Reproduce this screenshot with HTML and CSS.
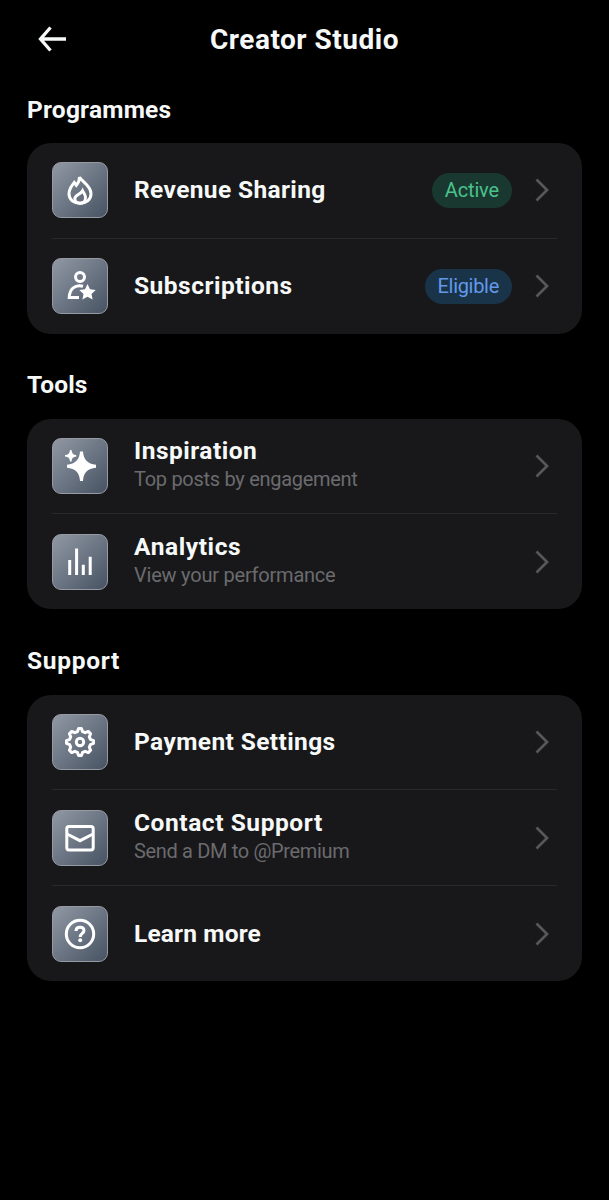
FILE: index.html
```html
<!DOCTYPE html>
<html lang="en">
<head>
    <meta charset="UTF-8">
    <meta name="viewport" content="width=device-width, initial-scale=1.0">
    <title>Creator Studio</title>
    <link rel="stylesheet" href="styles.css">
</head>
<body>
    <header>
        <a href="#" class="back" aria-label="Back">
            <svg width="28" height="26" viewBox="0 0 28 26"><path d="M12.500 1.500L2.500 13l10 11.500M2.500 13h25.500"/></svg>
        </a>
        <h1>Creator Studio</h1>
    </header>

    <main>
        <!-- Programmes -->
        <section>
            <h2 class="programmes">Programmes</h2>
            <div class="card">
                <a href="#" class="row">
                    <span class="icon">
                        <svg viewBox="0 0 32 32"><path d="M15.500 3C17.500 7.500 27 11.500 27 19.800C27 26 22 29.300 16 29.300S5 26 5 19.800C5 14.500 8 11.500 10.300 8.500L12.300 11.300C14.300 9 15.500 6.500 15.500 3Z"/><path d="M18.600 16.800C19.700 19 21.500 20.500 21.500 23.800C21.500 27.300 19 29.300 16 29.300S10.800 27.300 10.800 24.500C10.800 21 16.500 20.500 18.600 16.800Z"/></svg>
                    </span>
                    <span class="text"><span class="title revenue">Revenue Sharing</span></span>
                    <span class="badge active">Active</span>
                    <svg class="chevron" viewBox="0 0 14 24"><path d="M1.500 1.500L12 12L1.500 22.500"/></svg>
                </a>
                <a href="#" class="row">
                    <span class="icon">
                        <svg viewBox="0 0 32 32"><circle cx="16" cy="7" r="4.500"/><path d="M19 16.200C11 14 5.500 19 5.200 27.500H15"/><path class="fill" d="M23.500 14L26 19.200L31.700 19.900L27.500 23.900L28.600 29.500L23.500 26.700L18.400 29.500L19.500 23.900L15.300 19.900L21 19.200Z"/></svg>
                    </span>
                    <span class="text"><span class="title subscriptions">Subscriptions</span></span>
                    <span class="badge eligible">Eligible</span>
                    <svg class="chevron" viewBox="0 0 14 24"><path d="M1.500 1.500L12 12L1.500 22.500"/></svg>
                </a>
            </div>
        </section>

        <!-- Tools -->
        <section>
            <h2 class="tools">Tools</h2>
            <div class="card">
                <a href="#" class="row">
                    <span class="icon">
                        <svg viewBox="0 0 32 32"><path class="fill" d="M16 1.500H19C19.500 9.500 23.500 14 32 14.700V17.700C23.500 18.400 19.500 22.500 19 31H16C15.500 22.500 11.500 18.400 3 17.700V14.700C11.500 14 15.500 9.500 16 1.500ZM6 0H7.500C7.700 3.200 9.300 4.900 12.300 5V6.600C9.300 6.800 7.700 8.400 7.500 11.500H6C5.800 8.400 4.200 6.800 1 6.600V5C4.200 4.900 5.800 3.200 6 0Z"/></svg>
                    </span>
                    <span class="text">
                        <span class="title inspiration">Inspiration</span>
                        <span class="subtitle posts">Top posts by engagement</span>
                    </span>
                    <svg class="chevron" viewBox="0 0 14 24"><path d="M1.500 1.500L12 12L1.500 22.500"/></svg>
                </a>
                <a href="#" class="row">
                    <span class="icon">
                        <svg viewBox="0 0 32 32"><path d="M5.700 14V29M12.600 2.500V29M19.300 18.700V29M26.200 10.700V29"/></svg>
                    </span>
                    <span class="text">
                        <span class="title analytics">Analytics</span>
                        <span class="subtitle performance">View your performance</span>
                    </span>
                    <svg class="chevron" viewBox="0 0 14 24"><path d="M1.500 1.500L12 12L1.500 22.500"/></svg>
                </a>
            </div>
        </section>

        <!-- Support -->
        <section>
            <h2 class="support">Support</h2>
            <div class="card">
                <a href="#" class="row">
                    <span class="icon">
                        <svg viewBox="0 0 32 32"><path stroke-linejoin="round" d="M14.600 2.500H17.400L18.600 5.600L21.200 6.700L24.300 5.400L26.600 7.700L25.300 10.800L26.400 13.400L29.500 14.600V17.400L26.400 18.600L25.300 21.200L26.600 24.300L24.300 26.600L21.200 25.300L18.600 26.400L17.400 29.500H14.600L13.400 26.400L10.800 25.300L7.700 26.600L5.400 24.300L6.700 21.200L5.600 18.600L2.500 17.400V14.600L5.600 13.400L6.700 10.800L5.400 7.700L7.700 5.400L10.800 6.700L13.400 5.600Z"/><circle cx="16" cy="16" r="3.700"/></svg>
                    </span>
                    <span class="text"><span class="title payment">Payment Settings</span></span>
                    <svg class="chevron" viewBox="0 0 14 24"><path d="M1.500 1.500L12 12L1.500 22.500"/></svg>
                </a>
                <a href="#" class="row">
                    <span class="icon">
                        <svg viewBox="0 0 32 32"><rect x="2.800" y="4.500" width="26.400" height="23.500" rx="2.200"/><path d="M3 12L16 18.700L29 12"/></svg>
                    </span>
                    <span class="text">
                        <span class="title contact">Contact Support</span>
                        <span class="subtitle premium">Send a DM to @Premium</span>
                    </span>
                    <svg class="chevron" viewBox="0 0 14 24"><path d="M1.500 1.500L12 12L1.500 22.500"/></svg>
                </a>
                <a href="#" class="row">
                    <span class="icon">
                        <svg viewBox="0 0 32 32"><circle cx="16" cy="16" r="13.700"/><path d="M12 13C12 10.300 13.700 9.200 16 9.200C18.300 9.200 20 10.400 20 12.500C20 15.500 16.200 15.500 16.200 19"/><circle class="fill" cx="16.200" cy="22.300" r="2"/></svg>
                    </span>
                    <span class="text"><span class="title learn">Learn more</span></span>
                    <svg class="chevron" viewBox="0 0 14 24"><path d="M1.500 1.500L12 12L1.500 22.500"/></svg>
                </a>
            </div>
        </section>
    </main>
</body>
</html>
```
FILE: styles.css
```css
* {
    margin: 0;
    padding: 0;
    box-sizing: border-box;
}
body {
    font-family: Roboto, 'Liberation Sans', sans-serif;
    background-color: #000;
    color: #f7f9f9;
    min-height: 100vh;
}
a {
    color: inherit;
    text-decoration: none;
}
svg {
    display: block;
    fill: none;
    stroke: currentColor;
}
header {
    display: grid;
    grid-template-columns: 66px 1fr 66px;
    align-items: center;
    height: 78px;
}
.back {
    padding-left: 38px;
}
.back svg {
    stroke-width: 3.300;
}
h1 {
    font-size: 28px;
    font-weight: 700;
    letter-spacing: 0.500px;
    text-align: center;
}
main {
    padding: 0 27px;
}
h2 {
    height: 65px;
    padding-top: 17px;
    font-size: 24.500px;
    font-weight: 700;
    line-height: 30px;
}
section + section h2 {
    height: 85px;
    padding-top: 36px;
}
section + section h2.support {
    height: 85.500px;
    padding-top: 37px;
}
.card {
    background-color: #18181a;
    border-radius: 24px;
    padding: 0 25px;
}
.row {
    display: flex;
    align-items: center;
    height: 94.500px;
}
.row + .row {
    height: 96px;
    border-top: 1px solid #29292c;
}
.icon {
    display: grid;
    place-items: center;
    width: 56px;
    height: 56px;
    margin-right: 26px;
    border: 1px solid #969aa2;
    border-radius: 9px;
    background: linear-gradient(135deg, #9198a4, #475363);
    color: #fff;
}
.icon svg {
    width: 32px;
    height: 32px;
    stroke-width: 3;
}
.icon .fill {
    fill: currentColor;
    stroke: none;
}
.text {
    flex: 1;
    display: flex;
    flex-direction: column;
}
.text:has(.subtitle) {
    padding-bottom: 4px;
}
.title {
    font-size: 24.500px;
    font-weight: 700;
    line-height: 30px;
}
.subtitle {
    font-size: 20px;
    line-height: 26px;
    color: #6b6b6e;
}
.badge {
    height: 35px;
    margin-right: 22.500px;
    padding: 0 13px;
    border-radius: 18px;
    font-size: 20px;
    line-height: 34px;
}
.active {
    background-color: #193930;
    color: #4bc28c;
    letter-spacing: -0.150px;
}
.eligible {
    background-color: #193449;
    color: #6399e9;
    letter-spacing: -0.300px;
}
.chevron {
    width: 14px;
    height: 24px;
    margin-right: 8.500px;
    color: #57575a;
    stroke-width: 2.700;
}

/* Tracking */
.programmes { letter-spacing: 0.220px; }
.revenue { letter-spacing: 0.370px; }
.subscriptions { letter-spacing: 0.500px; }
.tools { letter-spacing: 0.150px; }
.inspiration { letter-spacing: 0.500px; }
.analytics { letter-spacing: 0.600px; }
.support { letter-spacing: 0.700px; }
.payment { letter-spacing: 0.400px; }
.contact { letter-spacing: 0.570px; }
.learn { letter-spacing: 0.150px; }
.posts { letter-spacing: -0.290px; }
.performance { letter-spacing: -0.220px; }
.premium { letter-spacing: -0.340px; }
```
